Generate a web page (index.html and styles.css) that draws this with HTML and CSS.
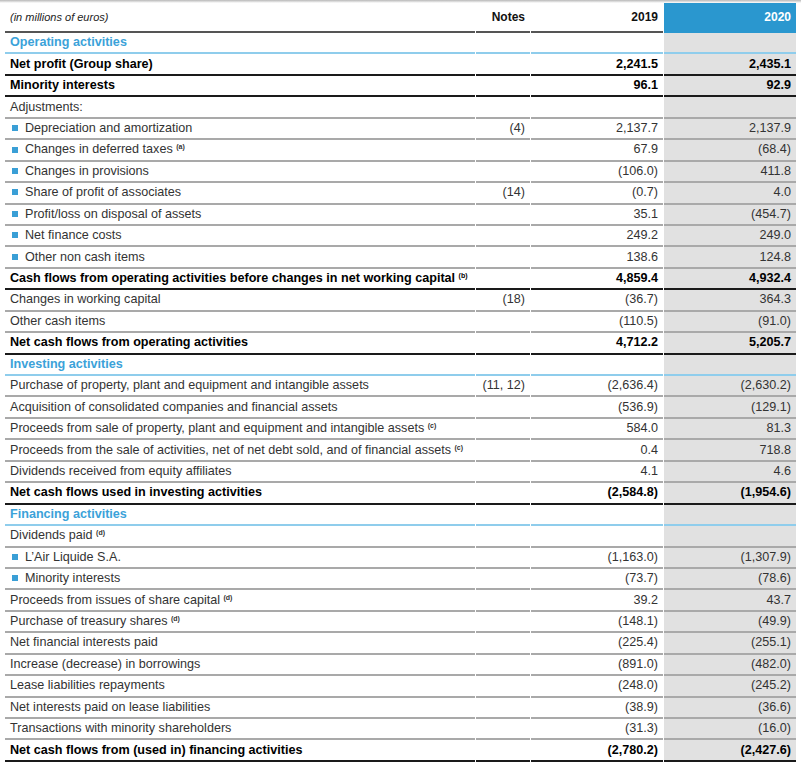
FILE: index.html
```html
<!DOCTYPE html>
<html lang="en">
<head>
    <meta charset="UTF-8">
    <title>Consolidated cash flow statement</title>
    <link rel="stylesheet" href="styles.css">
</head>
<body>
    <div class="topshadow"></div>
    <table class="cashflow">
        <colgroup>
            <col class="c-label">
            <col class="c-notes">
            <col class="c-y1">
            <col class="c-y2">
        </colgroup>
        <thead>
            <tr>
                <th class="unit">(in millions of euros)</th>
                <th class="num">Notes</th>
                <th class="num">2019</th>
                <th class="num current">2020</th>
            </tr>
        </thead>
        <tbody>
            <tr class="section"><td>Operating activities</td><td></td><td></td><td class="cur"></td></tr>
            <tr class="total"><td>Net profit (Group share)</td><td></td><td class="num">2,241.5</td><td class="num cur">2,435.1</td></tr>
            <tr class="total"><td>Minority interests</td><td></td><td class="num">96.1</td><td class="num cur">92.9</td></tr>
            <tr><td>Adjustments:</td><td></td><td></td><td class="cur"></td></tr>
            <tr><td><span class="bullet"></span>Depreciation and amortization</td><td class="num">(4)</td><td class="num">2,137.7</td><td class="num cur">2,137.9</td></tr>
            <tr><td><span class="bullet"></span>Changes in deferred taxes <sup>(a)</sup></td><td></td><td class="num">67.9</td><td class="num cur">(68.4)</td></tr>
            <tr><td><span class="bullet"></span>Changes in provisions</td><td></td><td class="num">(106.0)</td><td class="num cur">411.8</td></tr>
            <tr><td><span class="bullet"></span>Share of profit of associates</td><td class="num">(14)</td><td class="num">(0.7)</td><td class="num cur">4.0</td></tr>
            <tr><td><span class="bullet"></span>Profit/loss on disposal of assets</td><td></td><td class="num">35.1</td><td class="num cur">(454.7)</td></tr>
            <tr><td><span class="bullet"></span>Net finance costs</td><td></td><td class="num">249.2</td><td class="num cur">249.0</td></tr>
            <tr><td><span class="bullet"></span>Other non cash items</td><td></td><td class="num">138.6</td><td class="num cur">124.8</td></tr>
            <tr class="total"><td>Cash flows from operating activities before changes in net working capital <sup>(b)</sup></td><td></td><td class="num">4,859.4</td><td class="num cur">4,932.4</td></tr>
            <tr><td>Changes in working capital</td><td class="num">(18)</td><td class="num">(36.7)</td><td class="num cur">364.3</td></tr>
            <tr><td>Other cash items</td><td></td><td class="num">(110.5)</td><td class="num cur">(91.0)</td></tr>
            <tr class="total"><td>Net cash flows from operating activities</td><td></td><td class="num">4,712.2</td><td class="num cur">5,205.7</td></tr>
            <tr class="section"><td>Investing activities</td><td></td><td></td><td class="cur"></td></tr>
            <tr><td>Purchase of property, plant and equipment and intangible assets</td><td class="num">(11, 12)</td><td class="num">(2,636.4)</td><td class="num cur">(2,630.2)</td></tr>
            <tr><td>Acquisition of consolidated companies and financial assets</td><td></td><td class="num">(536.9)</td><td class="num cur">(129.1)</td></tr>
            <tr><td>Proceeds from sale of property, plant and equipment and intangible assets <sup>(c)</sup></td><td></td><td class="num">584.0</td><td class="num cur">81.3</td></tr>
            <tr><td>Proceeds from the sale of activities, net of net debt sold, and of financial assets <sup>(c)</sup></td><td></td><td class="num">0.4</td><td class="num cur">718.8</td></tr>
            <tr><td>Dividends received from equity affiliates</td><td></td><td class="num">4.1</td><td class="num cur">4.6</td></tr>
            <tr class="total"><td>Net cash flows used in investing activities</td><td></td><td class="num">(2,584.8)</td><td class="num cur">(1,954.6)</td></tr>
            <tr class="section"><td>Financing activities</td><td></td><td></td><td class="cur"></td></tr>
            <tr><td>Dividends paid <sup>(d)</sup></td><td></td><td></td><td class="cur"></td></tr>
            <tr><td><span class="bullet"></span>L’Air Liquide S.A.</td><td></td><td class="num">(1,163.0)</td><td class="num cur">(1,307.9)</td></tr>
            <tr><td><span class="bullet"></span>Minority interests</td><td></td><td class="num">(73.7)</td><td class="num cur">(78.6)</td></tr>
            <tr><td>Proceeds from issues of share capital <sup>(d)</sup></td><td></td><td class="num">39.2</td><td class="num cur">43.7</td></tr>
            <tr><td>Purchase of treasury shares <sup>(d)</sup></td><td></td><td class="num">(148.1)</td><td class="num cur">(49.9)</td></tr>
            <tr><td>Net financial interests paid</td><td></td><td class="num">(225.4)</td><td class="num cur">(255.1)</td></tr>
            <tr><td>Increase (decrease) in borrowings</td><td></td><td class="num">(891.0)</td><td class="num cur">(482.0)</td></tr>
            <tr><td>Lease liabilities repayments</td><td></td><td class="num">(248.0)</td><td class="num cur">(245.2)</td></tr>
            <tr><td>Net interests paid on lease liabilities</td><td></td><td class="num">(38.9)</td><td class="num cur">(36.6)</td></tr>
            <tr><td>Transactions with minority shareholders</td><td></td><td class="num">(31.3)</td><td class="num cur">(16.0)</td></tr>
            <tr class="total"><td>Net cash flows from (used in) financing activities</td><td></td><td class="num">(2,780.2)</td><td class="num cur">(2,427.6)</td></tr>
        </tbody>
    </table>
</body>
</html>
```

FILE: styles.css
```css
body {
    margin: 0;
    font-family: "Liberation Sans", Arial, sans-serif;
    color: #333;
    background-color: white;
}

.topshadow {
    height: 3px;
    background: linear-gradient(#b8b8b8, #fff);
}

.cashflow {
    margin-left: 4px;
    width: 792px;
    border-collapse: separate;
    border-spacing: 1px 0;
    font-size: 12.6px;
    table-layout: fixed;
}

.c-label { width: 470px; }
.c-notes { width: 54px; }
.c-y1 { width: 132px; }
.c-y2 { width: 132px; }

.cashflow th {
    height: 28px;
    padding: 0 5px;
    font-size: 12px;
    font-weight: bold;
    color: #111;
    text-align: left;
    border-bottom: 2px solid #555;
}

.cashflow th.unit {
    font-style: italic;
    font-weight: normal;
    font-size: 11px;
    color: #222;
}

.cashflow th.current {
    background-color: #2a97cf;
    color: white;
    border-bottom-color: #2a97cf;
}

.cashflow td {
    height: 19.44px;
    padding: 0 5px;
    line-height: 15px;
    white-space: nowrap;
    border-bottom: 2px solid #a9a9a9;
    vertical-align: middle;
}

.cashflow .num {
    text-align: right;
}

.cashflow td.cur {
    background-color: #e1e1e1;
}

.cashflow tr.total td {
    font-weight: bold;
    color: #000;
    border-bottom-color: #1a1a1a;
}

.cashflow tr.section td {
    color: #3ba2d9;
    font-weight: bold;
    border-bottom-color: #8fcdec;
}

.bullet {
    display: inline-block;
    width: 6px;
    height: 6px;
    margin: 0 7px 1px 2px;
    background-color: #3a9fd6;
    vertical-align: middle;
}

sup {
    font-size: 7px;
    font-weight: bold;
    vertical-align: 4px;
    line-height: 0;
}
```
